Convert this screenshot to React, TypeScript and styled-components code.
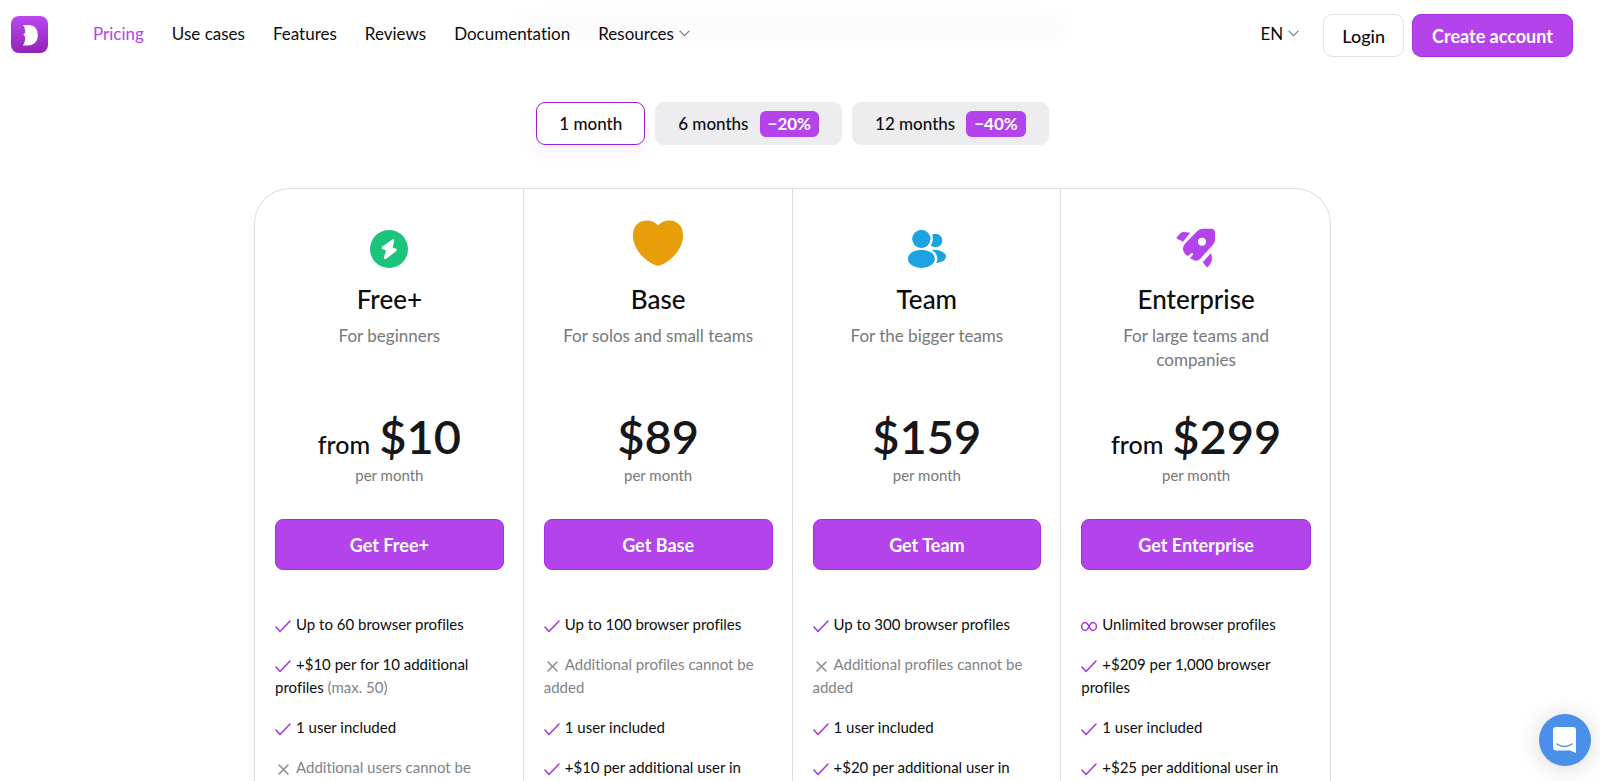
import React, { useState } from 'react';
import styled, { createGlobalStyle } from 'styled-components';

const GlobalStyle = createGlobalStyle`
  *, *::before, *::after { box-sizing: border-box; }
  body {
    margin: 0;
    background: #fff;
    color: #0c0c0e;
    font-family: Lato, "Liberation Sans", sans-serif;
    font-size: 17px;
    font-variant-ligatures: none;
  }
  button { font: inherit; color: inherit; cursor: pointer; }
`;

const Page = styled.div`
  padding-right: 15px;
`;

const Header = styled.header`
  position: sticky;
  top: 0;
  z-index: 2;
  display: flex;
  align-items: center;
  padding: 14px 12px 14px 11px;
  background: #fff;
`;

const HeaderHaze = styled.div`
  position: absolute;
  top: 16px;
  left: 33%;
  width: 34%;
  height: 20px;
  background: #fafafa;
  filter: blur(8px);
`;

const LogoLink = styled.a`
  display: block;
  height: 39px;
`;

const Nav = styled.nav`
  position: relative;
  display: flex;
  flex: 1;
  gap: 28px;
  margin-left: 45px;
`;

const NavLink = styled.a<{ $active?: boolean }>`
  padding-bottom: 4px;
  color: ${(p) => (p.$active ? '#b443ec' : '#0c0c0e')};
  line-height: 24px;
  text-decoration: none;
`;

const MenuButton = styled.button`
  display: flex;
  align-items: center;
  gap: 5px;
  padding: 0 0 4px;
  border: 0;
  background: none;
  line-height: 24px;
`;

const Actions = styled.div`
  display: flex;
  align-items: center;
  gap: 8px;
  margin-left: 24px;
`;

const HeaderButton = styled.button<{ $primary?: boolean }>`
  height: 43px;
  padding: 0 ${(p) => (p.$primary ? 19 : 18)}px;
  border: 1px solid ${(p) => (p.$primary ? '#a92fdc' : '#e2e2e5')};
  border-radius: 9px;
  background: ${(p) => (p.$primary ? '#b443ec' : '#fff')};
  color: ${(p) => (p.$primary ? '#fff' : '#0c0c0e')};
  font-size: 18px;
  font-weight: ${(p) => (p.$primary ? 700 : 500)};
`;

const Main = styled.main`
  padding: 31px 24px 0;
`;

const Periods = styled.div`
  display: flex;
  justify-content: center;
  gap: 10px;
`;

const PeriodButton = styled.button<{ $selected: boolean }>`
  display: flex;
  align-items: center;
  gap: 11px;
  height: 43px;
  padding: 0 22px;
  border: 1px solid ${(p) => (p.$selected ? '#9a22cf' : '#ededef')};
  border-radius: 9px;
  background: ${(p) => (p.$selected ? '#fff' : '#ededef')};
  box-shadow: ${(p) => (p.$selected ? '0 8px 16px rgba(180, 67, 236, 0.08)' : 'none')};
  font-weight: 500;
`;

const Discount = styled.span`
  padding: 0 8px;
  border-radius: 6px;
  background: #b443ec;
  color: #fff;
  font-weight: 700;
  line-height: 26px;
`;

const Plans = styled.div`
  display: grid;
  grid-template-columns: repeat(4, 1fr);
  max-width: 1077px;
  margin: 43px auto 0;
  border: 1px solid #dedee0;
  border-bottom: 0;
  border-radius: 36px 36px 0 0;
`;

const Plan = styled.section`
  display: flex;
  flex-direction: column;
  padding: 31px 19px 40px 20px;
  text-align: center;

  &:not(:last-child) { border-right: 1px solid #dedee0; }
`;

const PlanIcon = styled.div`
  display: flex;
  justify-content: center;
  align-items: flex-end;
  height: 48px;
`;

const PlanName = styled.h2`
  margin: 15px 0 0;
  font-size: 26px;
  font-weight: 500;
  line-height: 32px;
`;

const PlanAudience = styled.p`
  min-height: 48px;
  margin: 9px 16px 0;
  color: #77777b;
  line-height: 24px;
`;

const Price = styled.p`
  margin: 36px 0 0;
  color: #171719;
  font-size: 47px;
  font-weight: 600;
  line-height: 56px;
`;

const PriceFrom = styled.span`
  margin-right: 9px;
  color: #0c0c0e;
  font-size: 25px;
  font-weight: 500;
  line-height: 30px;
`;

const PricePeriod = styled.p`
  margin: 0;
  color: #77777b;
  font-size: 15px;
  line-height: 22px;
`;

const PlanButton = styled.button`
  height: 51px;
  margin-top: 33px;
  border: 1px solid #a92fdc;
  border-radius: 8px;
  background: #b443ec;
  color: #fff;
  font-size: 18px;
  font-weight: 700;
`;

const Features = styled.ul`
  margin: 43px 0 0;
  padding: 0;
  list-style: none;
  font-size: 15px;
  line-height: 23px;
  text-align: left;
`;

const Feature = styled.li<{ $muted: boolean }>`
  color: ${(p) => (p.$muted ? '#828286' : '#0c0c0e')};

  & + & { margin-top: 17px; }
`;

const FeatureIcon = styled.svg`
  width: 16px;
  height: 14px;
  margin-right: 5px;
  vertical-align: -3px;
  fill: none;
  stroke-width: 1.5;
  stroke-linecap: round;
  stroke-linejoin: round;
`;

const Note = styled.span`
  color: #828286;
`;

const ChatButton = styled.button`
  position: fixed;
  right: 9px;
  bottom: 15px;
  z-index: 3;
  display: flex;
  align-items: center;
  justify-content: center;
  width: 52px;
  height: 52px;
  padding: 0;
  border: 0;
  border-radius: 50%;
  background: #4a90ea;
  box-shadow: 0 2px 24px rgba(0, 0, 0, 0.16);
`;

const Logo = () => (
  <svg width="37" height="37" viewBox="0 0 37 37" aria-hidden="true">
    <defs>
      <linearGradient id="logo-fill" x1="0" y1="0" x2="0" y2="1">
        <stop offset="0" stopColor="#ba48f0" />
        <stop offset="1" stopColor="#9322b8" />
      </linearGradient>
    </defs>
    <rect width="37" height="37" rx="8" fill="url(#logo-fill)" />
    <path
      d="M11.8 9H17.5C23.6 9 26.8 13 26.8 19.3C26.8 25.6 23 29.4 17 29.4H11.8C13.8 26.8 14.2 24.4 14 20.8L12.4 18.6L14.2 16.6C14.3 13.6 13.6 11 11.8 9Z"
      fill="#fff"
    />
  </svg>
);

const Chevron = () => (
  <svg width="11" height="7" viewBox="0 0 11 7" fill="none" stroke="#77777b" aria-hidden="true">
    <path d="M1 1.2L5.5 5.7L10 1.2" strokeWidth="1.2" strokeLinecap="round" />
  </svg>
);

const BoltIcon = () => (
  <svg width="38" height="38" viewBox="0 0 38 38" aria-hidden="true">
    <circle cx="19" cy="19" r="19" fill="#1bc47d" />
    <path
      d="M22.4 9.6L12.4 16.4C11.2 17.3 11.4 18.8 12.7 19.2L16 20.3L14 27.2C13.7 28.8 15 29.6 16.2 28.7L26 21.2C27.2 20.3 26.9 18.9 25.6 18.4L22.6 17.4L24.2 11C24.5 9.4 23.5 8.9 22.4 9.6Z"
      fill="#fff"
    />
  </svg>
);

const HeartIcon = () => (
  <svg width="50" height="48" viewBox="0 0 50 48" aria-hidden="true">
    <path
      d="M25 5.6C19 -2.2 0 -2.2 0 15.5C0 30 13 41.5 22 45Q25 46.4 28 45C37 41.5 50 30 50 15.5C50 -2.2 31 -2.2 25 5.6Z"
      fill="#e89e08"
    />
  </svg>
);

const TeamIcon = () => (
  <svg width="40" height="39" viewBox="0 0 40 39" fill="#1aa3e0" aria-hidden="true">
    <circle cx="28.5" cy="11.5" r="6.8" />
    <ellipse cx="27" cy="27.5" rx="12" ry="6.8" />
    <g stroke="#fff" strokeWidth="5" paintOrder="stroke">
      <circle cx="14.4" cy="10" r="9" />
      <ellipse cx="14.4" cy="29.8" rx="13.5" ry="9.1" />
    </g>
    <circle cx="14.4" cy="10" r="9" />
  </svg>
);

const RocketIcon = () => (
  <svg width="40" height="40" viewBox="0 0 120 120" fill="#b443ec" aria-hidden="true">
    <path
      fillRule="evenodd"
      d="M64 9Q71 2 81 2H105Q117 2 117 14V36Q117 43 112 49L73 92Q65 101 54 97L42 91L51 80Q53 74 47 75L36 84Q22 77 21 64Q20 55 27 47ZM90 41A12 12 0 1 0 66 41A12 12 0 1 0 90 41Z"
    />
    <path d="M2 28L14 15Q18 11 24 12L43 14L21 41Q10 35 4 33Q1 31 2 28Z" />
    <path d="M105 75Q109 87 107 98Q105 105 98 115Q94 120 90 115L80 103Z" />
  </svg>
);

type Mark = 'check' | 'cross' | 'infinity';

const marks: Record<Mark, { d: string; color: string }> = {
  check: { d: 'M1 8L5 12.5L15 2', color: '#a335d8' },
  cross: { d: 'M4 3L13 12M13 3L4 12', color: '#8c8c90' },
  infinity: {
    d: 'M8 7.5C6.5 4.5 5.6 3.5 4.3 3.5A3.7 4 0 0 0 4.3 11.5C7.5 11.5 8.5 3.5 11.7 3.5A3.7 4 0 0 1 11.7 11.5C10.4 11.5 9.5 10.5 8 7.5Z',
    color: '#a335d8',
  },
};

interface FeatureData {
  mark: Mark;
  text: string;
  note?: string;
}

interface PlanData {
  name: string;
  audience: string;
  from?: boolean;
  price: string;
  icon: React.ReactNode;
  features: FeatureData[];
}

const plans: PlanData[] = [
  {
    name: 'Free+',
    audience: 'For beginners',
    from: true,
    price: '$10',
    icon: <BoltIcon />,
    features: [
      { mark: 'check', text: 'Up to 60 browser profiles' },
      { mark: 'check', text: '+$10 per for 10 additional profiles', note: '(max. 50)' },
      { mark: 'check', text: '1 user included' },
      { mark: 'cross', text: 'Additional users cannot be' },
    ],
  },
  {
    name: 'Base',
    audience: 'For solos and small teams',
    price: '$89',
    icon: <HeartIcon />,
    features: [
      { mark: 'check', text: 'Up to 100 browser profiles' },
      { mark: 'cross', text: 'Additional profiles cannot be added' },
      { mark: 'check', text: '1 user included' },
      { mark: 'check', text: '+$10 per additional user in' },
    ],
  },
  {
    name: 'Team',
    audience: 'For the bigger teams',
    price: '$159',
    icon: <TeamIcon />,
    features: [
      { mark: 'check', text: 'Up to 300 browser profiles' },
      { mark: 'cross', text: 'Additional profiles cannot be added' },
      { mark: 'check', text: '1 user included' },
      { mark: 'check', text: '+$20 per additional user in' },
    ],
  },
  {
    name: 'Enterprise',
    audience: 'For large teams and companies',
    from: true,
    price: '$299',
    icon: <RocketIcon />,
    features: [
      { mark: 'infinity', text: 'Unlimited browser profiles' },
      { mark: 'check', text: '+$209 per 1,000 browser profiles' },
      { mark: 'check', text: '1 user included' },
      { mark: 'check', text: '+$25 per additional user in' },
    ],
  },
];

const periods = [
  { label: '1 month' },
  { label: '6 months', discount: '−20%' },
  { label: '12 months', discount: '−40%' },
];

const links = ['Pricing', 'Use cases', 'Features', 'Reviews', 'Documentation'];

export default function App() {
  const [period, setPeriod] = useState('1 month');

  return (
    <Page>
      <GlobalStyle />
      <Header>
        <HeaderHaze />
        <LogoLink href="#" aria-label="Home">
          <Logo />
        </LogoLink>
        <Nav>
          {links.map((link) => (
            <NavLink key={link} href="#" $active={link === 'Pricing'}>
              {link}
            </NavLink>
          ))}
          <MenuButton type="button">
            Resources <Chevron />
          </MenuButton>
        </Nav>
        <MenuButton type="button">
          EN <Chevron />
        </MenuButton>
        <Actions>
          <HeaderButton type="button">Login</HeaderButton>
          <HeaderButton type="button" $primary>
            Create account
          </HeaderButton>
        </Actions>
      </Header>
      <Main>
        <Periods>
          {periods.map(({ label, discount }) => (
            <PeriodButton
              key={label}
              type="button"
              $selected={label === period}
              aria-pressed={label === period}
              onClick={() => setPeriod(label)}
            >
              {label}
              {discount && <Discount>{discount}</Discount>}
            </PeriodButton>
          ))}
        </Periods>
        <Plans>
          {plans.map((plan) => (
            <Plan key={plan.name}>
              <PlanIcon>{plan.icon}</PlanIcon>
              <PlanName>{plan.name}</PlanName>
              <PlanAudience>{plan.audience}</PlanAudience>
              <Price>
                {plan.from && <PriceFrom>from</PriceFrom>}
                {plan.price}
              </Price>
              <PricePeriod>per month</PricePeriod>
              <PlanButton type="button">Get {plan.name}</PlanButton>
              <Features>
                {plan.features.map(({ mark, text, note }) => (
                  <Feature key={text} $muted={mark === 'cross'}>
                    <FeatureIcon viewBox="0 0 16 14" stroke={marks[mark].color} aria-hidden="true">
                      <path d={marks[mark].d} />
                    </FeatureIcon>
                    {text}
                    {note && <Note> {note}</Note>}
                  </Feature>
                ))}
              </Features>
            </Plan>
          ))}
        </Plans>
      </Main>
      <ChatButton type="button" aria-label="Open chat">
        <svg width="24" height="26" viewBox="0 0 24 26" aria-hidden="true">
          <path d="M3 0H20Q23 0 23 3V26L17 23.5H3Q0 23.5 0 20.5V3Q0 0 3 0Z" fill="#fff" />
          <path
            d="M4 17Q11.5 22 19 17"
            fill="none"
            stroke="#4a90ea"
            strokeWidth="1.5"
            strokeLinecap="round"
          />
        </svg>
      </ChatButton>
    </Page>
  );
}
